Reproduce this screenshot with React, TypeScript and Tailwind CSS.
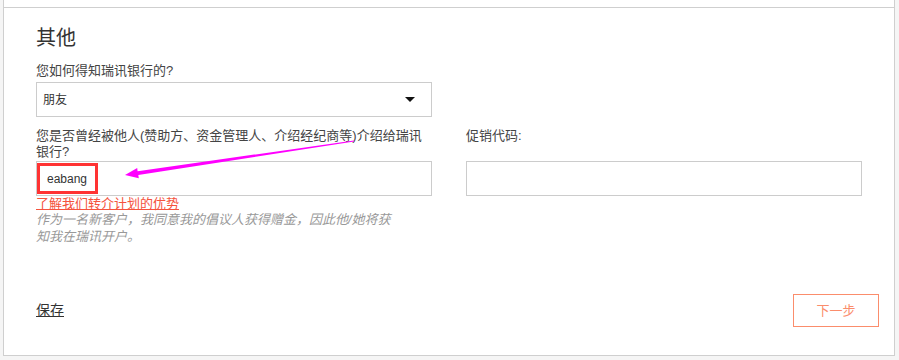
import React from "react";

const font = "font-['Liberation_Sans','Noto_Sans_CJK_SC',sans-serif]";

function Arrow() {
  // magenta annotation arrow pointing at the referrer field
  return (
    <svg
      className="absolute left-0 top-0 pointer-events-none"
      width="899"
      height="360"
      viewBox="0 0 899 360"
    >
      <polygon
        fill="#f0f"
        points="353.9,140.4 137.6,171.2 137.2,168 125,175 138.8,178.2 138.3,175 354.1,141.6"
      />
    </svg>
  );
}

export default function App() {
  return (
    <div className={`relative w-[899px] h-[360px] bg-[#f5f5f5] overflow-hidden ${font}`}>
      <div className="ml-[3px] w-[892px] h-[356px] bg-white border-l border-r border-b border-[#cfcfcf] flex flex-col">
        <div className="h-[8px] border-b border-[#cfcfcf]" />
        <div className="pl-[32px] pr-[15px] flex flex-col flex-1">
          <h2 className="mt-[16px] text-[20px] leading-[28px] text-[#333]">其他</h2>

          <label className="mt-[11px] text-[13px] leading-[16px] text-[#444]">
            您如何得知瑞讯银行的?
          </label>
          <div className="mt-[3px] w-[396px] h-[35px] border border-[#ccc] flex items-center justify-between pl-[6px] pr-[16px]">
            <span className="text-[12px] text-[#333]">朋友</span>
            <svg width="10" height="5" viewBox="0 0 10 5">
              <polygon points="0,0 10,0 5,5" fill="#111" />
            </svg>
          </div>

          <div className="mt-[11px] flex gap-[34px]">
            <div className="w-[396px] flex flex-col">
              <label className="h-[32px] text-[13px] leading-[16px] text-[#444]">
                您是否曾经被他人(赞助方、资金管理人、介绍经纪商等)介绍给瑞讯银行?
              </label>
              <div className="mt-[1px] h-[35px] border border-[#ccc] flex items-center pl-[10px] relative">
                <span className="text-[12px] text-[#333]">eabang</span>
                <div className="absolute left-0 top-[1px] w-[61px] h-[31px] border-[3px] border-[#f33]" />
              </div>
              <a className="text-[13px] leading-[15px] text-[#f5533d] underline w-fit">
                了解我们转介计划的优势
              </a>
              <p className="w-[362px] text-[13px] leading-[17px] italic text-[#999]">
                作为一名新客户，我同意我的倡议人获得赠金，因此他/她将获知我在瑞讯开户。
              </p>
            </div>
            <div className="w-[396px] flex flex-col">
              <label className="h-[32px] text-[13px] leading-[16px] text-[#444]">促销代码:</label>
              <div className="mt-[1px] h-[35px] border border-[#ccc]" />
            </div>
          </div>

          <div className="mt-[49px] flex items-center justify-between">
            <a className="text-[14px] text-[#333] underline">保存</a>
            <button className="w-[86px] h-[33px] border-[1.5px] border-[#fb8d6c] text-[13px] text-[#fb8d6c]">
              下一步
            </button>
          </div>
        </div>
      </div>
      <Arrow />
    </div>
  );
}
